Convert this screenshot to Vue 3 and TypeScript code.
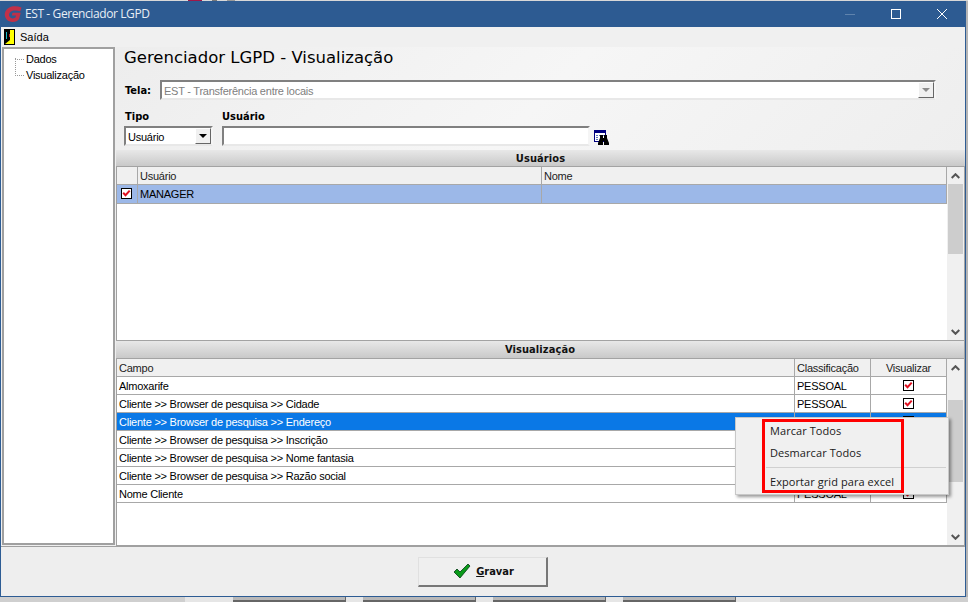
<script setup lang="ts">
interface Row { campo: string; cls: string; sel?: boolean }
const rows: Row[] = [
  { campo: 'Almoxarife', cls: 'PESSOAL' },
  { campo: 'Cliente >> Browser de pesquisa >> Cidade', cls: 'PESSOAL' },
  { campo: 'Cliente >> Browser de pesquisa >> Endereço', cls: 'PESSOAL', sel: true },
  { campo: 'Cliente >> Browser de pesquisa >> Inscrição', cls: 'PESSOAL' },
  { campo: 'Cliente >> Browser de pesquisa >> Nome fantasia', cls: 'PESSOAL' },
  { campo: 'Cliente >> Browser de pesquisa >> Razão social', cls: 'PESSOAL' },
  { campo: 'Nome Cliente', cls: 'PESSOAL' },
]
</script>

<template>
  <div class="desktop">
    <div class="topstrip"><span class="tb red"></span><span class="tb g"></span><span class="tb g2"></span></div>
    <div class="window">
      <header class="titlebar">
        <svg class="logo" width="18" height="18" viewBox="0 0 18 18">
          <path d="M17.5 2.5 C11 0 3.5 1 1.2 7 C-0.5 12 3 17 8.5 17 C11.5 17 14 15.8 15 14 L16.8 7.8 L8.5 7.8 L7.8 10.6 L12 10.6 L11.5 12.6 C9.5 14 6 13.6 5.2 10.8 C4.4 7 8.5 4 16.3 6.3 Z" fill="#c13048" />
        </svg>
        <span class="title">EST - Gerenciador LGPD</span>
        <span class="spacer"></span>
        <span class="winbtn"><svg width="12" height="12" viewBox="0 0 12 12"><path d="M1 6.5h10" stroke="#5f83ad" /></svg></span>
        <span class="winbtn"><svg width="12" height="12" viewBox="0 0 12 12"><rect x="1.5" y="1.5" width="9" height="9" fill="none" stroke="#fff" /></svg></span>
        <span class="winbtn"><svg width="12" height="12" viewBox="0 0 12 12"><path d="M1 1l10 10M11 1L1 11" stroke="#fff" /></svg></span>
      </header>

      <nav class="menubar">
        <svg width="11" height="16" viewBox="0 0 11 16" class="door">
          <rect x="0" y="0" width="11" height="16" fill="#000" />
          <rect x="1" y="1" width="9" height="14" fill="#ffff00" />
          <path d="M1 1h5v10l-5 4z" fill="#000" />
          <path d="M2 3h1v7H2z" fill="#18b8c8" />
          <path d="M5 5h1v3H5z" fill="#c02020" />
        </svg>
        <span class="menuitem">Saída</span>
      </nav>

      <div class="body">
        <aside class="tree">
          <div class="vline"></div>
          <div class="node"><span class="dots"></span>Dados</div>
          <div class="node"><span class="dots"></span>Visualização</div>
        </aside>

        <main class="main">
          <section class="form">
            <h1 class="heading">Gerenciador LGPD - Visualização</h1>
            <div class="tela-row">
              <label class="lbl">Tela:</label>
              <div class="combo disabled">
                <span class="combo-text">EST - Transferência entre locais</span>
                <span class="combo-btn"><i class="arrow grey"></i></span>
              </div>
            </div>
            <div class="filter-row">
              <div class="field">
                <label class="lbl tipo-lbl">Tipo</label>
                <div class="combo tipo">
                  <span class="combo-text">Usuário</span>
                  <span class="combo-btn"><i class="arrow"></i></span>
                </div>
              </div>
              <div class="field">
                <label class="lbl">Usuário</label>
                <div class="input"></div>
              </div>
              <svg class="binoc" width="16" height="16" viewBox="0 0 16 16">
                <rect x="0.5" y="0.5" width="11" height="11" fill="#fff" stroke="#000080" />
                <rect x="0" y="0" width="12" height="3" fill="#000080" />
                <path d="M2 5h2v1H2zM5 5h2v1H5zM8 5h2v1H8zM2 7h2v1H2zM2 9h2v1H2z" fill="#5a6fb5" />
                <path d="M6 5h3v3h1V5h3v3l2 5v2h-5v-4H9v4H4v-2l2-5z" fill="#000" />
              </svg>
            </div>
          </section>

          <div class="band">Usuários</div>
          <section class="gridbox users">
            <div class="gridarea">
              <div class="grow head">
                <span class="c c-check"></span>
                <span class="c c-user">Usuário</span>
                <span class="c c-nome">Nome</span>
              </div>
              <div class="grow tall light">
                <span class="c c-check">
                  <svg class="chk" width="11" height="11" viewBox="0 0 11 11"><rect x="0.5" y="0.5" width="10" height="10" fill="#fff" stroke="#000" /><path d="M2.2 4.8l2.3 2.4 4.2-4.6" fill="none" stroke="#e01020" stroke-width="2" /></svg>
                </span>
                <span class="c c-user">MANAGER</span>
                <span class="c c-nome"></span>
              </div>
            </div>
            <div class="scroll">
              <span class="sbtn"><svg width="9" height="6" viewBox="0 0 9 6"><path d="M0.7 5L4.5 1.2 8.3 5" fill="none" stroke="#555" stroke-width="2" /></svg></span>
              <span class="strack"><span class="thumb thumb-a"></span></span>
              <span class="sbtn"><svg width="9" height="6" viewBox="0 0 9 6"><path d="M0.7 1L4.5 4.8 8.3 1" fill="none" stroke="#555" stroke-width="2" /></svg></span>
            </div>
          </section>

          <div class="band vis">Visualização</div>
          <section class="gridbox fields">
            <div class="gridarea">
              <div class="grow head">
                <span class="c c-campo">Campo</span>
                <span class="c c-cls">Classificação</span>
                <span class="c c-vis center">Visualizar</span>
              </div>
              <div v-for="r in rows" :key="r.campo" class="grow" :class="{ sel: r.sel }">
                <span class="c c-campo">{{ r.campo }}</span>
                <span class="c c-cls">{{ r.cls }}</span>
                <span class="c c-vis center">
                  <svg class="chk" width="11" height="11" viewBox="0 0 11 11"><rect x="0.5" y="0.5" width="10" height="10" fill="#fff" stroke="#000" /><path d="M2.2 4.8l2.3 2.4 4.2-4.6" fill="none" stroke="#e01020" stroke-width="2" /></svg>
                </span>
              </div>
            </div>
            <div class="scroll">
              <span class="sbtn"><svg width="9" height="6" viewBox="0 0 9 6"><path d="M0.7 5L4.5 1.2 8.3 5" fill="none" stroke="#555" stroke-width="2" /></svg></span>
              <span class="strack"><span class="thumb thumb-b"></span></span>
              <span class="sbtn"><svg width="9" height="6" viewBox="0 0 9 6"><path d="M0.7 1L4.5 4.8 8.3 1" fill="none" stroke="#555" stroke-width="2" /></svg></span>
            </div>
          </section>

          <div class="ctx">
            <div class="ctx-item">Marcar Todos</div>
            <div class="ctx-item">Desmarcar Todos</div>
            <div class="ctx-sep"></div>
            <div class="ctx-item">Exportar grid para excel</div>
            <div class="redbox"></div>
          </div>
        </main>
      </div>

      <footer class="footer">
        <button class="save">
          <svg width="18" height="16" viewBox="0 0 18 16">
            <path d="M1 9l3-3 3 3 8-8 2 2L7 15z" fill="#0a9a1a" stroke="#003a10" stroke-width="0.8" />
          </svg>
          <span class="save-label"><u>G</u>ravar</span>
        </button>
      </footer>
    </div>
    <div class="under">
      <span class="ub" v-for="n in 4" :key="n"></span>
    </div>
  </div>
</template>

<style>
html, body { margin: 0; padding: 0; background: #e4e4e4; overflow: hidden; }
</style>

<style scoped>
.desktop {
  width: 968px;
  height: 602px;
  overflow: hidden;
  position: relative;
  font-family: "Liberation Sans", Arial, sans-serif;
  letter-spacing: -0.24px;
  font-size: 11px;
  color: #000;
  background: linear-gradient(90deg, #cfcfcf 965px, #b5b5b5 966px);
}
.topstrip { height: 1px; display: flex; padding-left: 188px; gap: 10px; background: #d8d8d8; }
.tb { height: 1px; display: block; }
.tb.red { width: 14px; background: #a01848; }
.tb.g { width: 5px; background: #777; }
.tb.g2 { width: 8px; background: #999; }
.window {
  width: 966px;
  height: 596px;
  box-sizing: border-box;
  border: 1px solid #2d5c94;
  border-top: 0;
  background: #efefef;
  display: flex;
  flex-direction: column;
}
.titlebar {
  height: 26px;
  background: #2d5b92;
  color: #e8eef5;
  display: flex;
  align-items: center;
  padding-left: 3px;
  flex: none;
}
.logo { margin-right: 3px; }
.title { font-size: 12px; letter-spacing: -0.4px; font-family: "Open Sans", "Noto Sans", sans-serif; position: relative; top: -1px; }
.spacer { flex: 1; }
.winbtn { width: 46px; display: flex; justify-content: center; align-items: center; }
.menubar {
  height: 20px;
  display: flex;
  align-items: center;
  padding-left: 3px;
  flex: none;
  background: #f0f0f0;
}
.door { margin-right: 5px; }
.menuitem { letter-spacing: 0; }
.body { flex: 1; display: flex; min-height: 0; padding-left: 1px; }
.tree {
  width: 113px;
  height: 498px;
  box-sizing: border-box;
  border: 2px solid #a0a0a0;
  background: #fff;
  padding-top: 2px;
  flex: none;
  position: relative;
}
.vline { position: absolute; left: 11px; top: 9px; height: 16px; border-left: 1px dotted #999; }
.node { height: 16px; line-height: 16px; padding-left: 11px; display: flex; align-items: center; }
.dots { width: 9px; border-top: 1px dotted #999; margin-right: 2px; }
.main { flex: 1; position: relative; display: flex; flex-direction: column; padding-left: 1px; min-width: 0; }
.form {
  height: 103px;
  box-sizing: border-box;
  padding: 0 0 0 8px;
  background: linear-gradient(135deg, #ededed, #f6f6f6 50%, #eeeeee);
  flex: none;
}
.heading { margin: 0; padding: 0; font-family: "DejaVu Sans", sans-serif; letter-spacing: 0; font-size: 16.5px; font-weight: 400; height: 21px; line-height: 21px; }
.tela-row { display: flex; align-items: center; margin-top: 12px; }
.lbl { font-weight: 700; font-family: "DejaVu Sans", sans-serif; font-stretch: condensed; letter-spacing: 0; }
.tela-row .lbl { width: 36px; padding-left: 1px; box-sizing: border-box; }
.tipo-lbl { padding-left: 1px; }
.combo { display: flex; background: #fff; box-sizing: border-box; border: 2px solid #808080; border-right-color: #f5f5f5; border-bottom-color: #e8e8e8; height: 20px; align-items: stretch; }
.combo.disabled { width: 776px; color: #7f7f7f; }
.combo-text { flex: 1; padding-left: 2px; line-height: 18px; }
.combo-btn { width: 16px; background: #f0f0f0; border: 1px solid #fff; border-right-color: #666; border-bottom-color: #666; box-sizing: border-box; display: flex; align-items: center; justify-content: center; }
.arrow { width: 0; height: 0; border-left: 4px solid transparent; border-right: 4px solid transparent; border-top: 4px solid #000; display: block; }
.arrow.grey { border-top-color: #8c8c8c; }
.filter-row { display: flex; margin-top: 9px; gap: 9px; align-items: flex-end; }
.field { display: flex; flex-direction: column; gap: 2px; }
.field .lbl { height: 15px; line-height: 15px; }
.combo.tipo { width: 89px; }
.input { width: 368px; height: 20px; box-sizing: border-box; background: #fff; border: 2px solid #808080; border-right-color: #f5f5f5; border-bottom-color: #e8e8e8; }
.binoc { margin-left: -5px; }
.band {
  height: 17px;
  line-height: 17px;
  text-align: center;
  font-weight: 700;
  font-family: "DejaVu Sans", sans-serif;
  font-stretch: condensed;
  letter-spacing: 0.1px;
  background: linear-gradient(#e8e8e8, #c9c9c9);
  flex: none;
  border-bottom: 1px solid #a3a3a3;
  box-sizing: border-box;
  color: #111;
}
.band.vis { height: 19px; line-height: 18px; border-top: 1px solid #a3a3a3; border-right: 1px solid #a3a3a3; }
.gridbox { display: flex; background: #fff; flex: none; border-left: 1px solid #a0a0a0; border-right: 1px solid #a3a3a3; }
.gridbox.users { height: 173px; }
.gridbox.fields { flex: 1; min-height: 0; border-bottom: 1px solid #a0a0a0; }
.gridarea { flex: 1; min-width: 0; }
.grow { display: flex; height: 18px; box-sizing: border-box; border-bottom: 1px solid #a8a8a8; line-height: 19px; background: #fff; }
.grow.head { background: #f0f0f0; color: #222; }
.grow.tall { height: 19px; }
.grow.light { background: #9cb8e8; }
.grow.sel { background: #0a78e6; color: #fff; }
.c { display: block; box-sizing: border-box; border-right: 1px solid #a8a8a8; padding-left: 2px; white-space: nowrap; overflow: hidden; }
.c-check { width: 21px; padding-left: 4px; }
.c-user { width: 404px; }
.c-nome { flex: 1; }
.c-campo { flex: 1; }
.c-cls { width: 76px; }
.c-vis { width: 76px; }
.center { text-align: center; padding-left: 0; }
.chk { display: inline-block; vertical-align: -1px; }
.scroll { width: 17px; background: #f0f0f0; display: flex; flex-direction: column; flex: none; }
.sbtn { height: 17px; display: flex; align-items: center; justify-content: center; flex: none; }
.strack { flex: 1; position: relative; display: block; }
.thumb { position: absolute; left: 1px; right: 1px; background: #cdcdcd; display: block; }
.thumb-a { top: 0; height: 70px; }
.thumb-b { top: 24px; height: 82px; }
.ctx {
  position: absolute;
  left: 620px;
  top: 370px;
  width: 214px;
  height: 78px;
  box-sizing: border-box;
  background: #f0f0f0;
  border: 1px solid #c8c8c8;
  box-shadow: 2px 2px 3px rgba(0,0,0,.4);
  padding-top: 2px;
  color: #1a1a1a;
  z-index: 3;
  font-family: "Open Sans", sans-serif;
  letter-spacing: 0.07px;
}
.ctx-item { height: 22px; line-height: 22px; padding-left: 34px; font-size: 11px; }
.ctx-sep { height: 1px; background: #d0d0d0; margin: 3px 2px 3px 30px; }
.redbox { position: absolute; left: 26px; top: 1px; width: 142px; height: 74px; box-sizing: border-box; border: 3px solid #f00; }
.footer { height: 50px; flex: none; display: flex; justify-content: center; align-items: center; background: #eeeeee; border-top: 1px solid #a0a0a0; box-sizing: border-box; }
.save {
  width: 130px;
  height: 30px;
  box-sizing: border-box;
  border: 1px solid #e0e0e0;
  border-right: 2px solid #777;
  border-bottom: 2px solid #777;
  background: #efefef;
  display: flex;
  align-items: center;
  justify-content: center;
  gap: 5px;
  padding: 0 0 0 2px;
  font-family: "DejaVu Sans", sans-serif;
  font-stretch: condensed;
  font-size: 11px;
  font-weight: 700;
  color: #111;
}
.under {
  height: 5px;
  display: flex;
  gap: 17px;
  padding-left: 233px;
  background: linear-gradient(90deg, #cfcfcf 185px, #e6e6e6 185px, #e6e6e6 780px, #cfcfcf 780px);
}
.ub { width: 113px; height: 5px; box-sizing: border-box; background: #b8b8b8; border-bottom: 2px solid #666; border-right: 1px solid #666; }
</style>
